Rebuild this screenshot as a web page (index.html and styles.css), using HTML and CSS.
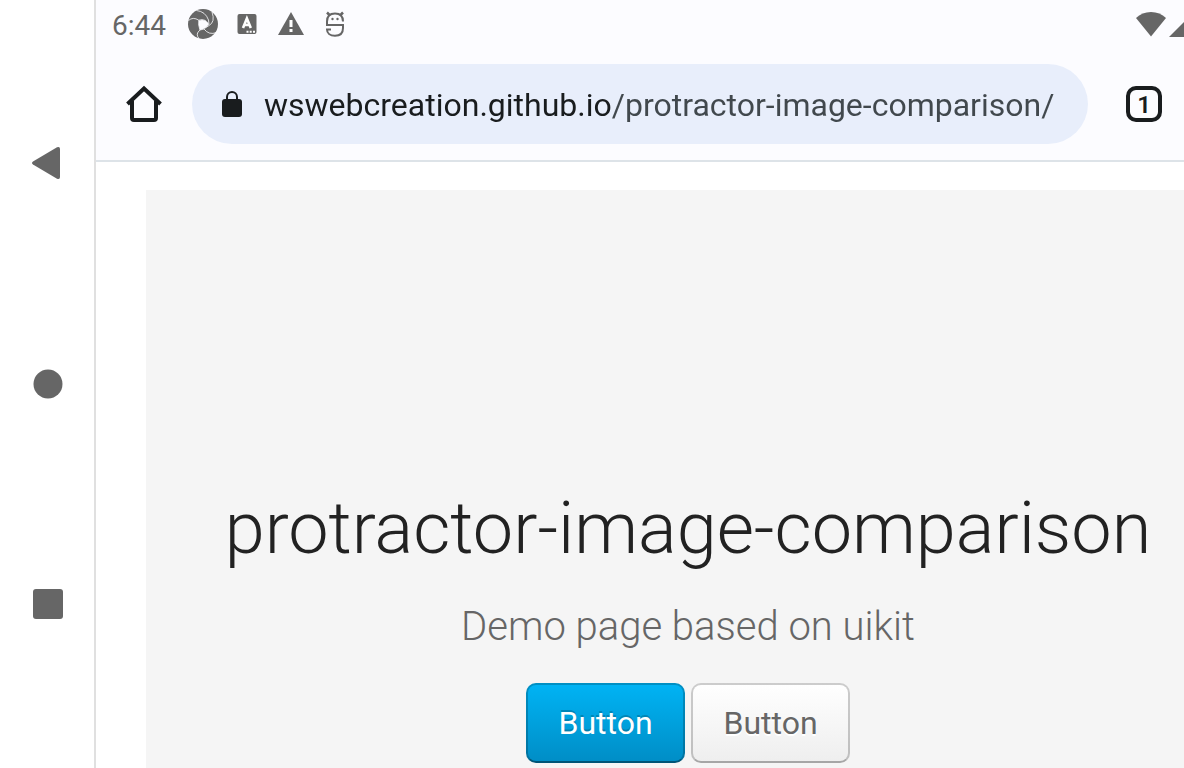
FILE: index.html
```
<!DOCTYPE html>
<html lang="en">
<head>
<meta charset="utf-8">
<meta name="viewport" content="width=device-width, initial-scale=1">
<title>protractor-image-comparison</title>
<link rel="stylesheet" href="styles.css">
</head>
<body class="device">
  <nav class="system-nav" aria-label="System navigation">
    <button class="icon-button" type="button" aria-label="Back">
      <svg width="32" height="36" viewBox="0 0 32 36"><path d="M25 1.300Q28 0 28 3V31Q28 34 25 32.700L1 18.400Q-1 17 1 15.600Z" fill="#666"/></svg>
    </button>
    <button class="icon-button" type="button" aria-label="Home screen">
      <svg width="30" height="30" viewBox="0 0 30 30"><circle cx="15" cy="15" r="14.5" fill="#666"/></svg>
    </button>
    <button class="icon-button" type="button" aria-label="Recent apps">
      <svg width="30" height="30" viewBox="0 0 30 30"><rect width="30" height="30" rx="3" fill="#666"/></svg>
    </button>
  </nav>
  <div class="browser">
    <header class="chrome">
      <div class="status">
        <time class="clock">6:44</time>
        <div class="notifications">
          <svg width="32" height="32" viewBox="0 0 32 32">
            <circle cx="16" cy="16" r="15" fill="#666"/>
            <path d="M11.800 12.500Q15 11.300 18.500 12.500Q21 14 22 16.300Q20 19 17.500 20.500L13 22Q11.300 17 11.800 12.500Z" fill="#fcfcff"/>
            <g fill="none" stroke="#fcfcff" stroke-width=".8">
              <path d="M1.500 12.500Q6 8.500 11.800 12.200Q15 10.800 18.500 12.500"/>
              <path d="M9.500 2.500Q18.500 3.500 21.500 12L22 16.300"/>
              <path d="M25 4Q28.500 14 22 17.500L17.500 20.500"/>
              <path d="M29.500 24.500Q22 27.500 17 21L13 22"/>
              <path d="M12 30.500Q8 26 13 22Q11 17 11.800 12.200"/>
            </g>
          </svg>
          <svg width="32" height="32" viewBox="0 0 32 32">
            <rect x="6.500" y="6" width="19" height="20" rx="2" fill="#666"/>
            <path d="M12 20L15.900 10.500L19.800 20M13.500 17H18.300" fill="none" stroke="#fff" stroke-width="2.600"/>
            <path d="M15.500 22.800h2v2h-2zM18.700 22.800h2v2h-2zM22 22.800h2v2h-2z" fill="#fff"/>
          </svg>
          <svg width="32" height="32" viewBox="0 0 32 32">
            <path d="M16 4L29 27H3Z" fill="#666"/>
            <path d="M14.500 12h3v7h-3zM14.500 21h3v3h-3z" fill="#fff"/>
          </svg>
          <svg width="32" height="32" viewBox="0 0 32 32">
            <g fill="none" stroke="#666" stroke-width="2">
              <path d="M24 13.500Q24 5.500 16 5.500T8 13.500V17H24V20C24 25 21 27.800 16 27.800S8 25 8 21.500H12"/>
              <path d="M8 4.500L11 7.500M24 4.500L21 7.500" stroke-width="2.500"/>
            </g>
            <circle cx="13.500" cy="11" r="1.200" fill="#666"/><circle cx="18.500" cy="11" r="1.200" fill="#666"/>
          </svg>
        </div>
        <div class="signals">
          <svg width="32" height="26" viewBox="0 0 32 26"><path d="M1 7Q7 1 16 1T31 7L16 25.500Z" fill="#666"/></svg>
          <svg width="15" height="26" viewBox="0 0 15 26"><path d="M0 26L15 11V26Z" fill="#666"/></svg>
        </div>
      </div>
      <div class="toolbar">
        <button class="icon-button" type="button" aria-label="Home">
          <svg width="40" height="40" viewBox="0 0 40 40"><path d="M3.500 20L20 4.500L36.500 20M8 17V34Q8 36 10 36H30Q32 36 32 34V17" fill="none" stroke="#191c1e" stroke-width="4"/></svg>
        </button>
        <label class="omnibox">
          <svg width="20" height="28" viewBox="0 0 20 28" role="img" aria-label="Secure connection"><rect y="9" width="20" height="18" rx="3" fill="#191c1e"/><path d="M5 10V7A5 5 0 0 1 15 7V10" fill="none" stroke="#191c1e" stroke-width="2"/></svg>
          <input class="address" type="text" aria-label="Address" value="wswebcreation.github.io/protractor-image-comparison/">
        </label>
        <button class="tabs" type="button" aria-label="1 open tab">1</button>
      </div>
    </header>
    <main class="page">
      <section class="hero">
        <h1 class="title">protractor-image-comparison</h1>
        <p class="lead">Demo page based on uikit</p>
        <div class="actions">
          <button class="button button-primary" type="button">Button</button>
          <button class="button" type="button">Button</button>
        </div>
      </section>
    </main>
  </div>
</body>
</html>
```
FILE: styles.css
```
* {
  box-sizing: border-box;
}

.device {
  display: flex;
  min-height: 100vh;
  margin: 0;
  overflow: hidden;
  background: #fff;
  font-family: Roboto, "Liberation Sans", sans-serif;
}

svg {
  display: block;
  flex: none;
}

.icon-button {
  display: grid;
  place-items: center;
  padding: 0;
  border: 0;
  background: none;
}

.system-nav {
  display: grid;
  flex: none;
  grid-template-rows: repeat(3, 1fr);
  width: 96px;
  padding: 54px 0 54px 2px;
  border-right: 2px solid #e0e0e0;
}

.browser {
  display: flex;
  flex: 1;
  flex-direction: column;
  min-width: 0;
}

.chrome {
  border-bottom: 2px solid #dde3e8;
  background: #fcfcff;
}

.status {
  display: flex;
  align-items: center;
  height: 48px;
  padding-left: 16px;
  color: #666;
}

.clock {
  padding-top: 4px;
  font-size: 28px;
  line-height: 44px;
}

.notifications {
  display: flex;
  align-items: center;
  gap: 12px;
  margin-left: 21px;
}

.signals {
  display: flex;
  gap: 2px;
  margin-left: auto;
}

.toolbar {
  display: flex;
  align-items: center;
  padding: 16px 22px 16px 28px;
}

.omnibox {
  display: flex;
  flex: 1;
  align-items: center;
  gap: 22px;
  min-width: 0;
  height: 80px;
  margin: 0 38px 0 28px;
  padding: 0 30px;
  border-radius: 40px;
  background: #e8eefb;
}

/* The host is darker than the path. */
.address {
  flex: 1;
  min-width: 0;
  padding: 2px 0 0;
  border: 0;
  background: linear-gradient(90deg, #191c1e 348px, #41484d 348px);
  background-clip: text;
  color: transparent;
  font: 400 32px/40px Roboto, "Liberation Sans", sans-serif;
}

.tabs {
  width: 36px;
  height: 36px;
  padding: 2px 0 0;
  border: 4px solid #191c1e;
  border-radius: 10px;
  background: none;
  color: #191c1e;
  font: 600 24px/26px Roboto, "Liberation Sans", sans-serif;
}

.page {
  display: flex;
  flex: 1;
  padding: 28px 0 0 50px;
}

.hero {
  flex: 1;
  padding: 297px 0 5px 46px;
  background: #f5f5f5;
  text-align: center;
}

.title {
  margin: 0 0 32px;
  color: #222;
  font-size: 72px;
  font-weight: 300;
  line-height: 84px;
  white-space: nowrap;
}

.lead {
  margin: 0 0 32px;
  color: #666;
  font-size: 40px;
  font-weight: 300;
  line-height: 48px;
}

.actions {
  display: flex;
  justify-content: center;
  gap: 6px;
}

.button {
  min-width: 159px;
  height: 80px;
  padding: 0 30px;
  border: 2px solid rgba(0, 0, 0, 0.2);
  border-bottom-color: rgba(0, 0, 0, 0.3);
  border-radius: 10px;
  background: linear-gradient(#fff, #eee) border-box;
  color: #666;
  font: 400 32px/76px Roboto, "Liberation Sans", sans-serif;
  text-shadow: 0 2px 0 #fff;
}

.button-primary {
  border-bottom-color: rgba(0, 0, 0, 0.4);
  background: linear-gradient(#00b4f5, #008dc5) border-box;
  color: #fff;
  text-shadow: 0 -2px 0 rgba(0, 0, 0, 0.2);
}
```
